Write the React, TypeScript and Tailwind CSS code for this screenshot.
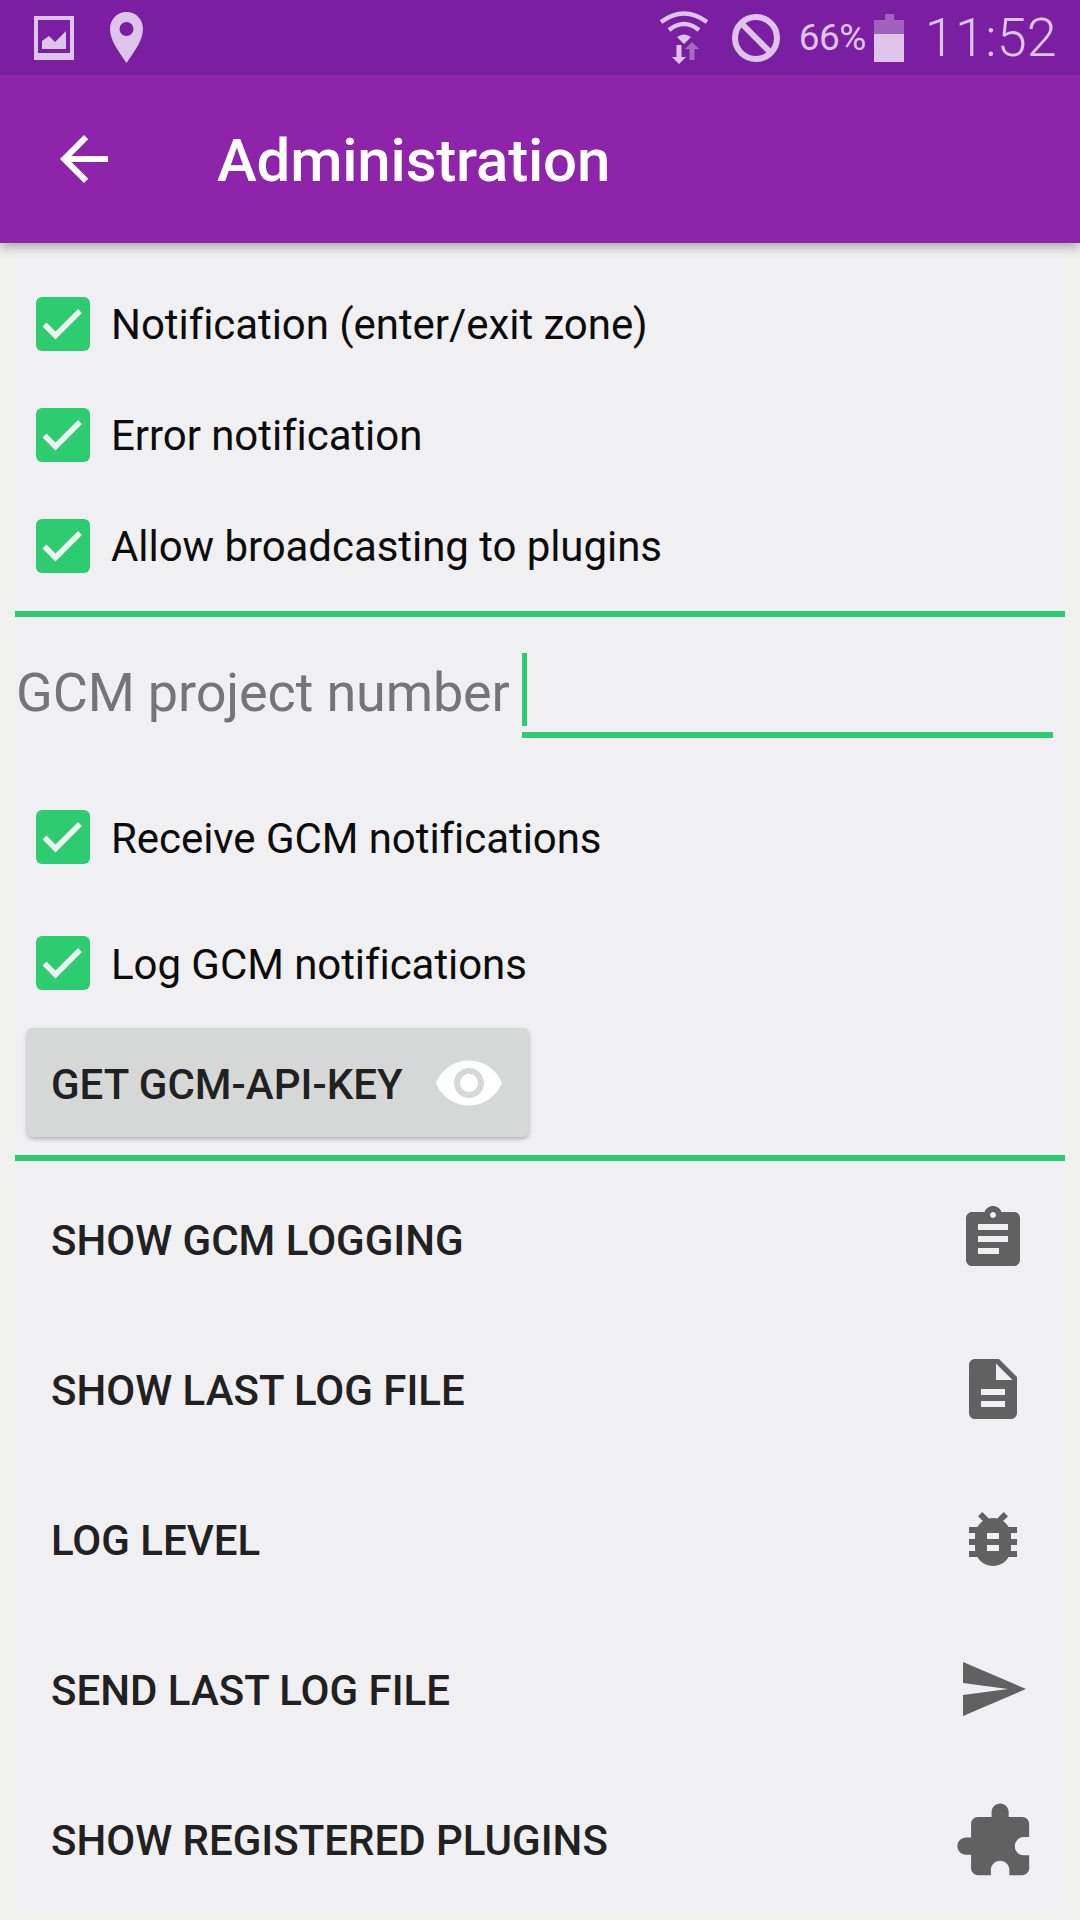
import React from 'react';

const roboto = { fontFamily: 'Roboto, sans-serif' };

const Icon = ({ d, className }: { d: string; className?: string }) => (
  <svg viewBox="0 0 24 24" className={className} fill="currentColor">
    <path d={d} />
  </svg>
);

const icons = {
  back: 'M20 11H7.83l5.59-5.59L12 4l-8 8 8 8 1.41-1.41L7.83 13H20v-2z',
  eye: 'M12 4.5C7 4.5 2.73 7.61 1 12c1.73 4.39 6 7.5 11 7.5s9.27-3.11 11-7.5c-1.73-4.39-6-7.5-11-7.5zM12 17c-2.76 0-5-2.24-5-5s2.24-5 5-5 5 2.24 5 5-2.24 5-5 5zm0-8c-1.66 0-3 1.34-3 3s1.34 3 3 3 3-1.34 3-3-1.34-3-3-3z',
  assignment:
    'M19 3h-4.18C14.4 1.84 13.3 1 12 1c-1.3 0-2.4.84-2.82 2H5c-1.1 0-2 .9-2 2v14c0 1.1.9 2 2 2h14c1.1 0 2-.9 2-2V5c0-1.1-.9-2-2-2zm-7 0c.55 0 1 .45 1 1s-.45 1-1 1-1-.45-1-1 .45-1 1-1zm2 14H7v-2h7v2zm3-4H7v-2h10v2zm0-4H7V7h10v2z',
  description:
    'M14 2H6c-1.1 0-1.99.9-1.99 2L4 20c0 1.1.89 2 1.99 2H18c1.1 0 2-.9 2-2V8l-6-6zm2 16H8v-2h8v2zm0-4H8v-2h8v2zm-3-5V3.5L18.5 9H13z',
  bug: 'M20 8h-2.81c-.45-.78-1.07-1.45-1.82-1.96L17 4.41 15.59 3l-2.17 2.17C12.96 5.06 12.49 5 12 5c-.49 0-.96.06-1.41.17L8.41 3 7 4.41l1.62 1.63C7.88 6.55 7.26 7.22 6.81 8H4v2h2.09c-.05.33-.09.66-.09 1v1H4v2h2v1c0 .34.04.67.09 1H4v2h2.81c1.04 1.79 2.97 3 5.19 3s4.15-1.21 5.19-3H20v-2h-2.09c.05-.33.09-.66.09-1v-1h2v-2h-2v-1c0-.34-.04-.67-.09-1H20V8zm-6 8h-4v-2h4v2zm0-4h-4v-2h4v2z',
  send: 'M2.01 21L23 12 2.01 3 2 10l15 2-15 2z',
  extension:
    'M20.5 11H19V7c0-1.1-.9-2-2-2h-4V3.5C13 2.12 11.88 1 10.5 1S8 2.12 8 3.5V5H4c-1.1 0-1.99.9-1.99 2v3.8H3.5c1.49 0 2.7 1.21 2.7 2.7s-1.21 2.7-2.7 2.7H2V20c0 1.1.9 2 2 2h3.8v-1.5c0-1.49 1.21-2.7 2.7-2.7 1.49 0 2.7 1.21 2.7 2.7V22H17c1.1 0 2-.9 2-2v-4h1.5c1.38 0 2.5-1.12 2.5-2.5S21.88 11 20.5 11z',
};

const Check = ({ label, className }: { label: string; className?: string }) => (
  <div className={`flex items-center pl-[21px] ${className ?? ''}`}>
    <div className="w-[54px] h-[54px] rounded-[6px] bg-[#2ecc71] shrink-0">
      <svg viewBox="0 0 54 54" className="w-[54px] h-[54px]" fill="none">
        <path d="M8.5 27.5L19.5 38.5L44 14" stroke="#eff3f0" strokeWidth="5.5" />
      </svg>
    </div>
    <span className="ml-[21px] pt-[2px] text-[42px] text-[#0c0c0c] tracking-[-0.06px]">{label}</span>
  </div>
);

const ActionRow = ({ label, icon, big }: { label: string; icon: string; big?: boolean }) => (
  <div className="h-[147px] mb-[3px] bg-[#f0eff1] flex items-center justify-between px-[36px]">
    <span className="pt-[4px] text-[42px] font-medium text-[#212121]">{label}</span>
    <div className="w-[72px] h-[72px] flex items-center justify-center">
      {big ? (
        <Icon d={icon} className="ml-[4px] mt-[4px] w-[82px] h-[82px] shrink-0 text-[#616161] -scale-x-100" />
      ) : (
        <Icon d={icon} className="w-[72px] h-[72px] shrink-0 text-[#616161]" />
      )}
    </div>
  </div>
);

const StatusBar = () => (
  <div className="h-[75px] bg-[#7b1fa2] flex items-center text-[#dfc4ea] shrink-0">
    {/* picture */}
    <svg viewBox="0 0 40 44" className="ml-[34px] w-[40px] h-[44px]" fill="currentColor">
      <path fillRule="evenodd" d="M0 0H40V44H0ZM4 4V37H36V4Z" />
      <path d="M8 33V25L15 20L21 26L32 15V33Z" />
    </svg>
    {/* pin */}
    <svg viewBox="0 0 33 51" className="ml-[36px] w-[33px] h-[51px]" fill="currentColor">
      <path
        fillRule="evenodd"
        d="M16.5 0C7 0 0 7.5 0 17C0 29 10 41 16.5 51C23 41 33 29 33 17C33 7.5 26 0 16.5 0ZM16.5 10A7 7 0 1 1 16.5 24A7 7 0 1 1 16.5 10Z"
      />
    </svg>
    <div className="flex-1" />
    {/* wifi */}
    <svg viewBox="0 0 50 53" className="w-[50px] h-[53px]" fill="none">
      <path d="M2 11Q25 -6 48 11" stroke="currentColor" strokeWidth="4.5" />
      <path d="M10 19Q25 7 40 19" stroke="currentColor" strokeWidth="4.5" />
      <path d="M18 26Q25 21 32 26L25 33Z" fill="currentColor" />
      <path d="M17.5 34H22.5V46H27L20 53L13 46H17.5Z" fill="currentColor" />
      <path d="M30.5 49H35.5V38H40L33 31L26 38H30.5Z" fill="currentColor" fillOpacity="0.45" />
    </svg>
    {/* blocked */}
    <svg viewBox="0 0 48 48" className="ml-[23px] w-[48px] h-[48px]" fill="none" stroke="currentColor" strokeWidth="6">
      <circle cx="24" cy="24" r="21" />
      <path d="M9 9L39 39" />
    </svg>
    <span className="ml-[19px] text-[37px] leading-none tracking-[-0.5px]">66%</span>
    {/* battery */}
    <svg viewBox="0 0 30 48" className="ml-[8px] w-[30px] h-[48px]" fill="currentColor">
      <path d="M11 0H20V6H30V20H0V6H11Z" fillOpacity="0.4" />
      <path d="M0 20H30V48H0Z" />
    </svg>
    <span className="ml-[21px] mr-[23px] text-[54px] leading-none font-light tracking-[0.2px]">11:52</span>
  </div>
);

export default function App() {
  return (
    <div style={roboto} className="w-[1080px] h-[1920px] overflow-hidden bg-[#f0f0ef] flex flex-col">
      <StatusBar />

      <div className="h-[168px] bg-[#8e24aa] flex items-center pl-[48px] text-white shadow-[0_4px_10px_rgba(0,0,0,0.3)] relative shrink-0">
        <Icon d={icons.back} className="w-[72px] h-[72px]" />
        <span className="ml-[97px] pt-[4px] text-[60px] font-medium tracking-[-0.2px]">Administration</span>
      </div>

      <div className="mx-[15px] flex-1">
        <div className="pt-[25px] pb-[10px] bg-[#f0eff1]">
          <Check label="Notification (enter/exit zone)" className="h-[111px]" />
          <Check label="Error notification" className="h-[111px]" />
          <Check label="Allow broadcasting to plugins" className="h-[111px]" />
        </div>
        <div className="h-[6px] bg-[#2ecc71]" />

        <div className="bg-[#f0eff1]">
          <div className="flex items-start h-[121px]">
            <span className="text-[54px] leading-none text-[#757575] mt-[49px] ml-[1px] w-[506px] tracking-[-0.15px]">GCM project number</span>
            <div className="w-[531px] pt-[36px]">
              <div className="w-[5px] h-[73px] bg-[#2ecc71]" />
              <div className="mt-[6px] h-[6px] bg-[#2ecc71]" />
            </div>
          </div>

          <Check label="Receive GCM notifications" className="h-[54px] mt-[72px]" />
          <Check label="Log GCM notifications" className="h-[54px] mt-[72px]" />

          <div className="pt-[38px] pb-[18px] pl-[12px]">
            <button className="w-[502px] h-[109px] bg-[#d6d7d7] rounded-[6px] shadow-[0_2px_4px_rgba(0,0,0,0.25)] flex items-center pl-[24px]">
              <span className="pt-[4px] text-[42px] font-medium text-[#212121]">GET GCM-API-KEY</span>
              <Icon d={icons.eye} className="ml-[30px] w-[72px] h-[72px] text-white" />
            </button>
          </div>
        </div>

        <div className="h-[6px] bg-[#2ecc71]" />

        <div className="mt-[4px]">
          <ActionRow label="SHOW GCM LOGGING" icon={icons.assignment} />
          <ActionRow label="SHOW LAST LOG FILE" icon={icons.description} />
          <ActionRow label="LOG LEVEL" icon={icons.bug} />
          <ActionRow label="SEND LAST LOG FILE" icon={icons.send} />
          <ActionRow label="SHOW REGISTERED PLUGINS" icon={icons.extension} big />
        </div>
      </div>
    </div>
  );
}
